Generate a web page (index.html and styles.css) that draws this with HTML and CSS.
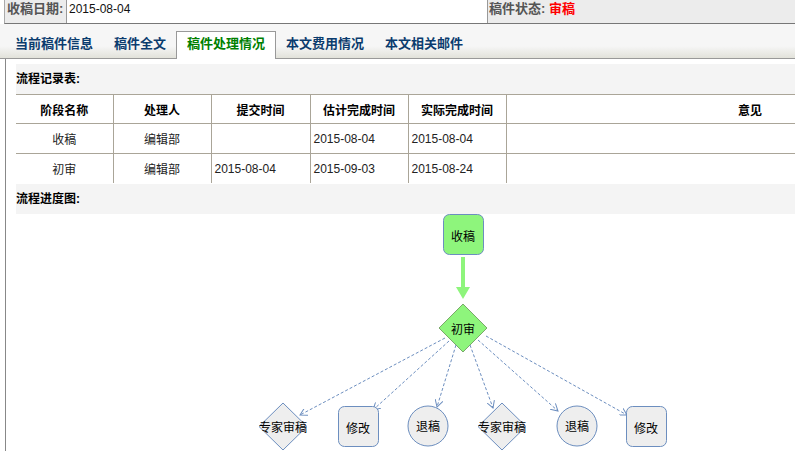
FILE: index.html
```html
<!DOCTYPE html>
<html lang="zh-CN">
<head>
    <meta charset="UTF-8">
    <title>稿件处理情况</title>
    <link rel="stylesheet" href="styles.css">
</head>
<body>
    <div class="info-row">
        <div class="info-label">收稿日期:</div>
        <div class="info-value">2015-08-04</div>
        <div class="info-label info-status">稿件状态: <span class="status-text">审稿</span></div>
    </div>

    <ul class="tabs">
        <li>当前稿件信息</li>
        <li>稿件全文</li>
        <li class="active">稿件处理情况</li>
        <li>本文费用情况</li>
        <li>本文相关邮件</li>
    </ul>

    <div class="panel">
        <div class="section-title">流程记录表:</div>
        <table class="flow-table">
            <colgroup>
                <col style="width:97px">
                <col style="width:98px">
                <col style="width:99px">
                <col style="width:98px">
                <col style="width:98px">
                <col>
            </colgroup>
            <tr>
                <th>阶段名称</th>
                <th>处理人</th>
                <th>提交时间</th>
                <th>估计完成时间</th>
                <th>实际完成时间</th>
                <th class="remark">意见</th>
            </tr>
            <tr>
                <td class="center">收稿</td>
                <td class="center">编辑部</td>
                <td></td>
                <td>2015-08-04</td>
                <td>2015-08-04</td>
                <td></td>
            </tr>
            <tr>
                <td class="center">初审</td>
                <td class="center">编辑部</td>
                <td>2015-08-04</td>
                <td>2015-09-03</td>
                <td>2015-08-24</td>
                <td></td>
            </tr>
        </table>

        <div class="section-title">流程进度图:</div>
        <svg class="flow-chart" width="779" height="237" viewBox="16 214 779 237">
            <defs>
                <marker id="arr" markerWidth="8" markerHeight="8" refX="7" refY="4" orient="auto" markerUnits="userSpaceOnUse">
                    <path d="M0,0 L7,4 L0,8" fill="none" stroke="#6c8ebf"/>
                </marker>
            </defs>

            <!-- 收稿 -> 初审 -->
            <rect class="node-done" x="443.5" y="214.5" width="40" height="40" rx="6"/>
            <text x="463" y="235">收稿</text>
            <rect class="green-arrow" x="461" y="257" width="4" height="30"/>
            <polygon class="green-arrow" points="456,287 470,287 463,299"/>
            <polygon class="node-current" points="463,304 487,328 463,352 439,328"/>
            <text x="463" y="328">初审</text>

            <!-- 下一步 -->
            <g class="links">
                <line x1="445" y1="338" x2="300" y2="415"/>
                <line x1="449" y1="341" x2="373" y2="410"/>
                <line x1="456" y1="345" x2="437" y2="407"/>
                <line x1="470" y1="345" x2="493" y2="408"/>
                <line x1="478" y1="340" x2="558" y2="411"/>
                <line x1="486" y1="336" x2="627" y2="415"/>
            </g>

            <polygon class="node" points="283,403 307,426.5 283,450 259,426.5"/>
            <text x="283" y="426">专家审稿</text>
            <rect class="node" x="338.5" y="406.5" width="40" height="40" rx="6"/>
            <text x="358" y="427">修改</text>
            <circle class="node" cx="428" cy="426" r="20"/>
            <text x="428" y="425">退稿</text>
            <polygon class="node" points="502,403 526,426.5 502,450 478,426.5"/>
            <text x="502" y="426">专家审稿</text>
            <circle class="node" cx="577" cy="426" r="20"/>
            <text x="577" y="425">退稿</text>
            <rect class="node" x="626.5" y="406.5" width="40" height="40" rx="6"/>
            <text x="646" y="427">修改</text>
        </svg>
    </div>
</body>
</html>
```

FILE: styles.css
```css
html, body {
    overflow: hidden;
}
body {
    margin: 0;
    font-family: "Liberation Sans", "Noto Sans CJK SC", sans-serif;
    font-size: 12px;
    color: #222;
    background-color: #fff;
}
.info-row {
    display: flex;
    height: 23px;
    margin-left: 4px;
    border-left: 1px solid #aaa;
    border-bottom: 1px solid #777;
    line-height: 18px;
}
.info-label {
    width: 59px;
    padding-left: 2px;
    background-color: #ececec;
    border-right: 1px solid #999;
    font-size: 13px;
    font-weight: bold;
    color: #555;
}
.info-value {
    width: 418px;
    padding-left: 2px;
    border-right: 1px solid #999;
    color: #111;
}
.info-status {
    flex: 1;
    padding-left: 1px;
    border-right: none;
}
.status-text {
    color: #ff0000;
}
.tabs {
    display: flex;
    align-items: flex-end;
    height: 35px;
    box-sizing: border-box;
    margin: 0;
    padding: 7px 0 0 4px;
    list-style: none;
    background: linear-gradient(#f6f6f6 65%, #e2e2da);
    border-bottom: 1px solid #999;
}
.tabs li {
    box-sizing: border-box;
    height: 28px;
    margin: 0 -1px -1px 0;
    padding: 0 10px;
    border: 1px solid transparent;
    border-bottom: none;
    line-height: 24px;
    font-size: 13px;
    font-weight: bold;
    color: #0b3c6e;
}
.tabs li.active {
    background-color: #fff;
    border-color: #999;
    color: #008000;
}
.panel {
    height: 387px;
    margin-left: 5px;
    padding: 5px 0 0 10px;
    border-left: 1px solid #888;
}
.section-title {
    height: 30px;
    line-height: 30px;
    background-color: #f4f4f4;
    font-weight: bold;
    color: #000;
}
.flow-table {
    width: 100%;
    table-layout: fixed;
    border-collapse: collapse;
    margin-bottom: 1px;
}
.flow-table th, .flow-table td {
    height: 29px;
    padding: 0 3px;
    border-top: 1px solid #aaa598;
    border-left: 1px solid #aaa598;
    text-align: left;
    font-weight: normal;
}
.flow-table th {
    height: 28px;
    text-align: center;
    font-weight: bold;
    color: #000;
}
.flow-table th.remark {
    text-align: right;
    padding-right: 33px;
}
.flow-table tr > :first-child {
    border-left: none;
}
.flow-table td.center {
    text-align: center;
}
.flow-chart {
    display: block;
}
.flow-chart text {
    font-family: "Noto Sans CJK SC", sans-serif;
    font-size: 12px;
    fill: #000;
    text-anchor: middle;
    dominant-baseline: central;
}
.node-done {
    fill: #8ef57c;
    stroke: #6c8ebf;
}
.node-current {
    fill: #8ef57c;
    stroke: #7aa86a;
}
.green-arrow {
    fill: #8ef57c;
}
.node {
    fill: #eeeeee;
    stroke: #6c8ebf;
}
.links line {
    stroke: #6c8ebf;
    stroke-dasharray: 3 2;
    marker-end: url(#arr);
}
```
